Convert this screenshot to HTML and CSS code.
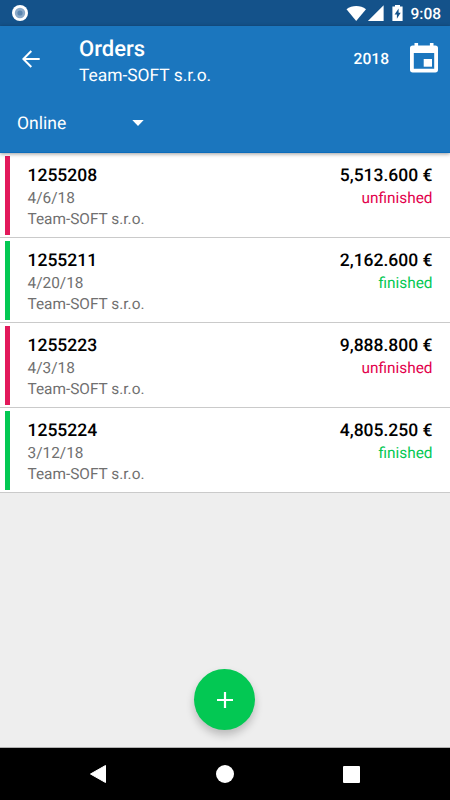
FILE: index.html
```html
<!DOCTYPE html>
<html lang="en">
<head>
    <meta charset="UTF-8">
    <meta name="viewport" content="width=device-width, initial-scale=1.0">
    <title>Orders</title>
    <link rel="stylesheet" href="styles.css">
</head>
<body>
    <div class="status-bar">
        <svg class="status-dot" width="16" height="16" viewBox="0 0 16 16">
            <circle cx="8" cy="8" r="8" fill="#fff"/>
            <circle cx="8" cy="8" r="5.2" fill="#8aa9c8"/>
            <circle cx="8" cy="8" r="2.6" fill="#5b86b0"/>
        </svg>
        <svg class="status-icons" width="57" height="18" viewBox="0 0 57 18">
            <path d="M.5 4.2C6-.2 14.500-.2 20 4.200L10.200 16z" fill="#fff"/>
            <path d="M37.600.3v15.700H21.900z" fill="#fff"/>
            <path d="M49 0h5v1.600h2.600V16H46.400V1.600H49z" fill="#fff"/>
            <path d="M52.600 3.500L48.600 9.400h2.300v4.300l3.800-6h-2.100z" fill="#14528a"/>
        </svg>
        <span class="clock">9:08</span>
    </div>
    <header>
        <div class="toolbar">
            <svg class="back" width="18" height="18" viewBox="0 0 18 18">
                <path d="M17.700 9H1.500M9.300 1L1.300 9l8 8" fill="none" stroke="#fff" stroke-width="2"/>
            </svg>
            <div class="titles">
                <h1>Orders</h1>
                <p>Team-SOFT s.r.o.</p>
            </div>
            <span class="year">2018</span>
            <svg class="calendar" width="28" height="30" viewBox="0 0 28 30">
                <path d="M4.500 0h3.600v2.400h11.800V0h3.600v2.400h1.800A2.700 2.700 0 0 1 28 5.100v21.600a2.700 2.700 0 0 1-2.700 2.700H2.700A2.700 2.700 0 0 1 0 26.700V5.100a2.700 2.700 0 0 1 2.700-2.700h1.800zM3.800 10v15.700h20.400V10z" fill="#fff" fill-rule="evenodd"/>
                <path d="M13.700 16H22v7.700h-8.300z" fill="#fff"/>
            </svg>
        </div>
        <div class="spinner">
            <span>Online</span>
            <svg width="12" height="6" viewBox="0 0 12 6">
                <path d="M.3 0h11.400L6 6z" fill="#fff"/>
            </svg>
        </div>
    </header>
    <main>
        <ul class="orders">
            <li class="order unfinished">
                <div class="info">
                    <h2>1255208</h2>
                    <p>4/6/18</p>
                    <p>Team-SOFT s.r.o.</p>
                </div>
                <div class="amount">
                    <h2>5,513.600 €</h2>
                    <p class="state">unfinished</p>
                </div>
            </li>
            <li class="order finished">
                <div class="info">
                    <h2>1255211</h2>
                    <p>4/20/18</p>
                    <p>Team-SOFT s.r.o.</p>
                </div>
                <div class="amount">
                    <h2>2,162.600 €</h2>
                    <p class="state">finished</p>
                </div>
            </li>
            <li class="order unfinished">
                <div class="info">
                    <h2>1255223</h2>
                    <p>4/3/18</p>
                    <p>Team-SOFT s.r.o.</p>
                </div>
                <div class="amount">
                    <h2>9,888.800 €</h2>
                    <p class="state">unfinished</p>
                </div>
            </li>
            <li class="order finished">
                <div class="info">
                    <h2>1255224</h2>
                    <p>3/12/18</p>
                    <p>Team-SOFT s.r.o.</p>
                </div>
                <div class="amount">
                    <h2>4,805.250 €</h2>
                    <p class="state">finished</p>
                </div>
            </li>
        </ul>
        <button class="add" aria-label="Add order">
            <svg width="16" height="16" viewBox="0 0 16 16">
                <path d="M8 0v16M0 8h16" stroke="#fff" stroke-width="2.2"/>
            </svg>
        </button>
    </main>
    <nav>
        <svg width="16" height="18" viewBox="0 0 16 18">
            <path d="M15.500.5v17L.5 9z" fill="#fff" stroke="#fff" stroke-linejoin="round"/>
        </svg>
        <svg width="18" height="18" viewBox="0 0 18 18">
            <circle cx="9" cy="9" r="9" fill="#fff"/>
        </svg>
        <svg width="17" height="17" viewBox="0 0 17 17">
            <rect width="17" height="17" rx="1" fill="#fff"/>
        </svg>
    </nav>
</body>
</html>
```

FILE: styles.css
```css
* {
    box-sizing: border-box;
}
body {
    margin: 0;
    height: 800px;
    display: flex;
    flex-direction: column;
    font-family: Roboto, sans-serif;
    background-color: #eeeeee;
    overflow: hidden;
    text-rendering: geometricPrecision;
}
h1, h2, p, ul {
    margin: 0;
    padding: 0;
}
svg {
    display: block;
    flex: none;
}
.status-bar {
    height: 26px;
    display: flex;
    align-items: center;
    padding: 0 9px 0 12px;
    background-color: #14528a;
    color: #ffffff;
}
.status-icons {
    margin-left: auto;
    margin-right: 7px;
    margin-top: 2px;
}
.clock {
    font-size: 15.5px;
    font-weight: 500;
    line-height: 26px;
    padding-top: 2px;
}
header {
    position: relative;
    height: 127px;
    background-color: #1b76be;
    border-bottom: 1px solid #0d6cbb;
    box-shadow: 0 1px 4px rgba(0,0,0,0.4);
    color: #ffffff;
}
.toolbar {
    height: 66px;
    display: flex;
    align-items: center;
    padding: 0 12px 0 22px;
}
.titles {
    margin-left: 39px;
    padding-top: 6px;
}
.titles h1 {
    font-size: 22px;
    font-weight: 500;
    line-height: 28px;
}
.titles p {
    font-size: 17.4px;
    line-height: 24px;
}
.year {
    margin-left: auto;
    margin-right: 21px;
    font-size: 15.6px;
    font-weight: 500;
}
.calendar {
    margin-top: -2px;
}
.spinner {
    display: flex;
    align-items: center;
    justify-content: space-between;
    width: 144px;
    height: 62px;
    padding-left: 17px;
    font-size: 17.5px;
}
.spinner span {
    padding-top: 2px;
}
main {
    flex: 1;
    display: flex;
    flex-direction: column;
    align-items: center;
    border-bottom: 1px solid #b0b0b0;
}
.orders {
    width: 100%;
    list-style: none;
}
.order {
    display: flex;
    justify-content: space-between;
    height: 85px;
    padding: 0 17.5px 0 5px;
    background-color: #ffffff;
    border-bottom: 1px solid #cacaca;
}
.order::before {
    content: "";
    width: 5px;
    margin: 3px 17.5px 2px 0;
    background-color: #e2195b;
}
.order.finished::before {
    background-color: #03c853;
}
.info {
    flex: 1;
    padding-top: 11px;
}
.amount {
    padding-top: 11px;
    text-align: right;
}
.order h2 {
    font-size: 17.5px;
    font-weight: 500;
    line-height: 24px;
    color: #000000;
}
.order p {
    font-size: 15.4px;
    line-height: 21px;
    color: #707070;
}
.order .state {
    color: #e2004b;
}
.order.finished .state {
    color: #03c853;
}
.add {
    display: flex;
    align-items: center;
    justify-content: center;
    width: 61px;
    height: 61px;
    margin: auto 1px 17px 0;
    padding: 0;
    border: none;
    border-radius: 50%;
    background-color: #03c853;
    box-shadow: 0 5px 9px rgba(0,0,0,0.22);
}
nav {
    height: 52px;
    display: flex;
    align-items: center;
    justify-content: space-between;
    padding: 0 90px;
    background-color: #000000;
}
```
